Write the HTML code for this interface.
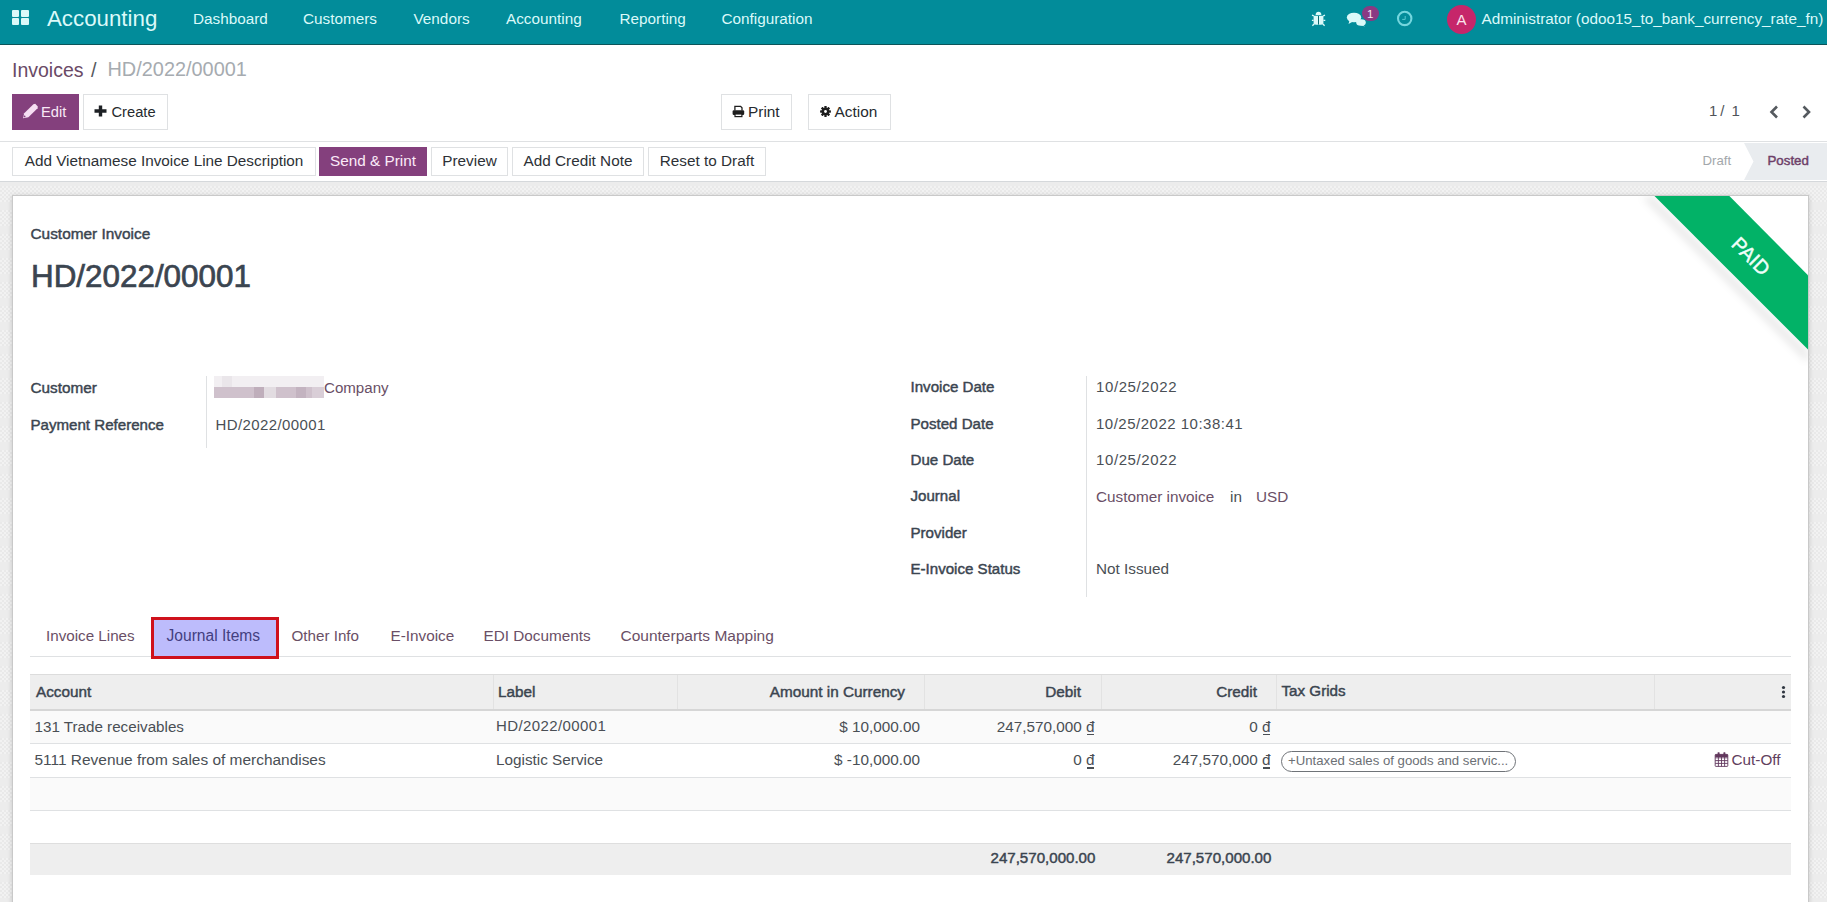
<!DOCTYPE html>
<html><head><meta charset="utf-8"><style>
html,body{margin:0;padding:0;width:1827px;height:902px;overflow:hidden;background:#fff;}
body{position:relative;font-family:"Liberation Sans", sans-serif;}
.t{position:absolute;white-space:nowrap;}
.b{position:absolute;}
</style></head><body>
<div class="b" style="left:0px;top:0px;width:1827px;height:44px;background:#028c9a;"></div>
<div class="b" style="left:0px;top:44px;width:1827px;height:1px;background:#0b5459;"></div>
<div class="b" style="left:11.5px;top:10.3px;width:7.7px;height:6.8px;background:#dbf9f9;border-radius:1px;"></div>
<div class="b" style="left:20.9px;top:10.3px;width:7.7px;height:6.8px;background:#dbf9f9;border-radius:1px;"></div>
<div class="b" style="left:11.5px;top:18.1px;width:7.7px;height:6.8px;background:#dbf9f9;border-radius:1px;"></div>
<div class="b" style="left:20.9px;top:18.1px;width:7.7px;height:6.8px;background:#dbf9f9;border-radius:1px;"></div>
<div class="t " style="left:47.00px;top:5.13px;font-size:22.3px;line-height:27.88px;color:#dbf9f9;font-weight:400;">Accounting</div>
<div class="t " style="left:193.00px;top:9.44px;font-size:15.3px;line-height:19.12px;color:#dbf9f9;font-weight:400;">Dashboard</div>
<div class="t " style="left:303.00px;top:9.44px;font-size:15.3px;line-height:19.12px;color:#dbf9f9;font-weight:400;">Customers</div>
<div class="t " style="left:413.50px;top:9.44px;font-size:15.3px;line-height:19.12px;color:#dbf9f9;font-weight:400;">Vendors</div>
<div class="t " style="left:506.00px;top:9.44px;font-size:15.3px;line-height:19.12px;color:#dbf9f9;font-weight:400;">Accounting</div>
<div class="t " style="left:619.50px;top:9.44px;font-size:15.3px;line-height:19.12px;color:#dbf9f9;font-weight:400;">Reporting</div>
<div class="t " style="left:721.50px;top:9.44px;font-size:15.3px;line-height:19.12px;color:#dbf9f9;font-weight:400;">Configuration</div>
<svg class="b" style="left:1306px;top:6px" width="26" height="24" viewBox="0 0 26 24">
<path d="M9.6 8.9 Q9.8 5.8 12.5 5.8 Q15.2 5.8 15.4 8.9 Z" fill="#dbf9f9"/>
<path d="M7.6 9.7 H17.4 V16.5 Q17.4 18.8 15 18.8 H10 Q7.6 18.8 7.6 16.5 Z" fill="#dbf9f9"/>
<rect x="12" y="10" width="1" height="8.6" fill="#0a6a72"/>
<path d="M7.8 9.9 L6 9.2 M17.2 9.9 L19 9.2 M7.6 14.3 H5.9 M17.4 14.3 H19.3 M8.3 17.8 L6.4 19.8 M16.7 17.8 L18.6 19.8" stroke="#dbf9f9" stroke-width="1.3"/>
</svg>
<svg class="b" style="left:1346px;top:11px" width="20" height="16" viewBox="0 0 20 16">
<ellipse cx="15" cy="11.5" rx="4.8" ry="3.2" fill="#dbf9f9"/>
<path d="M16 13 L19 15.5 L14 14 Z" fill="#dbf9f9"/>
<ellipse cx="8" cy="6.5" rx="7.2" ry="4.8" fill="#dbf9f9"/>
<path d="M3.5 9.5 L2.5 13 L7 10.5 Z" fill="#dbf9f9"/>
</svg>
<div class="b" style="left:1361.5px;top:6px;width:17.5px;height:15px;background:#8a3a83;border-radius:8px;"></div>
<div class="t " style="left:1361.50px;top:7.03px;font-size:11.5px;line-height:14.38px;color:#f6e6f4;font-weight:400;width:17.5px;text-align:center;">1</div>
<svg class="b" style="left:1396px;top:10px" width="17" height="17" viewBox="0 0 17 17">
<circle cx="8.7" cy="8.4" r="6.7" fill="none" stroke="#74d6de" stroke-width="2.1"/>
<path d="M9.2 6 V9.4 H6.2" fill="none" stroke="#58c9cf" stroke-width="1"/>
</svg>
<div class="b" style="left:1447px;top:5px;width:29px;height:29px;background:#c6266a;border-radius:50%;"></div>
<div class="t " style="left:1447.00px;top:10.63px;font-size:15px;line-height:18.75px;color:#fbe3ec;font-weight:400;width:29px;text-align:center;">A</div>
<div class="t " style="left:1481.50px;top:8.94px;font-size:15.3px;line-height:19.12px;color:#dbf9f9;font-weight:400;">Administrator (odoo15_to_bank_currency_rate_fn)</div>
<div class="t " style="left:12.00px;top:57.85px;font-size:19.5px;line-height:24.38px;color:#6a4a66;font-weight:400;">Invoices</div>
<div class="t " style="left:91.00px;top:57.56px;font-size:19.8px;line-height:24.75px;color:#55595e;font-weight:400;">/</div>
<div class="t " style="left:107.50px;top:57.46px;font-size:19.9px;line-height:24.88px;color:#a6abb0;font-weight:400;">HD/2022/00001</div>
<div class="b" style="left:12px;top:94px;width:67px;height:36px;background:#84407d;"></div>
<svg class="b" style="left:0;top:0" width="60" height="130" viewBox="0 0 60 130">
<polygon points="23,118.2 24.2,113.2 33.4,104.2 35.2,103.8 37.8,106.4 37.6,108.2 28.4,117.2" fill="#f6def3"/>
<circle cx="24.6" cy="116.4" r="0.9" fill="#84407d"/>
</svg>
<div class="t " style="left:41.00px;top:102.92px;font-size:14.7px;line-height:18.38px;color:#f9e9f7;font-weight:400;">Edit</div>
<div class="b" style="left:83px;top:94px;width:85px;height:36px;background:#fff;border:1px solid #dfe1e3;box-sizing:border-box;"></div>
<svg class="b" style="left:94px;top:105px" width="13" height="12" viewBox="0 0 13 12">
<path d="M6.5 0.5 V11.5 M0.5 6 H12.5" stroke="#1d2024" stroke-width="3.4"/>
</svg>
<div class="t " style="left:111.50px;top:102.92px;font-size:14.7px;line-height:18.38px;color:#262a2e;font-weight:400;">Create</div>
<div class="b" style="left:721px;top:94px;width:71px;height:36px;background:#fff;border:1px solid #dfe1e3;box-sizing:border-box;"></div>
<svg class="b" style="left:732px;top:105px" width="13" height="13" viewBox="0 0 13 13">
<path d="M2.9 5.5 V1.4 H8.6 L10 2.8 V5.5" fill="none" stroke="#1e1e1e" stroke-width="1.3"/>
<rect x="0.6" y="5.3" width="11.6" height="4.6" rx="1.2" fill="#1e1e1e"/>
<rect x="3" y="9" width="6.9" height="2.6" fill="#fff" stroke="#1e1e1e" stroke-width="1.2"/>
</svg>
<div class="t " style="left:748.00px;top:101.74px;font-size:15.4px;line-height:19.25px;color:#262a2e;font-weight:400;">Print</div>
<div class="b" style="left:808px;top:94px;width:83px;height:36px;background:#fff;border:1px solid #dfe1e3;box-sizing:border-box;"></div>
<svg class="b" style="left:819.8px;top:106px" width="11" height="11" viewBox="0 0 11 11">
<g fill="#1e1e1e"><circle cx="5.5" cy="5.5" r="3.7"/>
<rect x="4.3" y="0.1" width="2.4" height="10.8" rx="0.4"/><rect x="0.1" y="4.3" width="10.8" height="2.4" rx="0.4"/>
<rect x="4.3" y="0.1" width="2.4" height="10.8" rx="0.4" transform="rotate(45 5.5 5.5)"/><rect x="4.3" y="0.1" width="2.4" height="10.8" rx="0.4" transform="rotate(-45 5.5 5.5)"/></g>
<circle cx="5.5" cy="5.5" r="1.4" fill="#fff"/>
</svg>
<div class="t " style="left:834.50px;top:101.74px;font-size:15.4px;line-height:19.25px;color:#262a2e;font-weight:400;">Action</div>
<div class="t " style="left:1709.00px;top:101.83px;font-size:15px;line-height:18.75px;color:#4f5459;font-weight:400;">1</div>
<div class="t " style="left:1720.30px;top:101.83px;font-size:15px;line-height:18.75px;color:#4f5459;font-weight:400;">/</div>
<div class="t " style="left:1731.50px;top:101.83px;font-size:15px;line-height:18.75px;color:#4f5459;font-weight:400;">1</div>
<svg class="b" style="left:1768px;top:104px" width="46" height="16" viewBox="0 0 46 16">
<path d="M9 2.5 L3.5 8 L9 13.5" fill="none" stroke="#555a5f" stroke-width="2.6"/>
<path d="M35.5 2.5 L41 8 L35.5 13.5" fill="none" stroke="#555a5f" stroke-width="2.6"/>
</svg>
<div class="b" style="left:0px;top:141px;width:1827px;height:1px;background:#dfe1e3;"></div>
<div class="b" style="left:12px;top:147px;width:304px;height:29px;background:#fff;border:1px solid #dfe1e3;box-sizing:border-box;"></div>
<div class="t " style="left:12.00px;top:151.24px;font-size:15.3px;line-height:19.12px;color:#2d3136;font-weight:400;width:304px;text-align:center;">Add Vietnamese Invoice Line Description</div>
<div class="b" style="left:319px;top:147px;width:108px;height:29px;background:#84407d;"></div>
<div class="t " style="left:319.00px;top:151.24px;font-size:15.3px;line-height:19.12px;color:#fbeaf8;font-weight:400;width:108px;text-align:center;">Send &amp; Print</div>
<div class="b" style="left:431px;top:147px;width:77px;height:29px;background:#fff;border:1px solid #dfe1e3;box-sizing:border-box;"></div>
<div class="t " style="left:431.00px;top:151.24px;font-size:15.3px;line-height:19.12px;color:#2d3136;font-weight:400;width:77px;text-align:center;">Preview</div>
<div class="b" style="left:512px;top:147px;width:132px;height:29px;background:#fff;border:1px solid #dfe1e3;box-sizing:border-box;"></div>
<div class="t " style="left:512.00px;top:151.24px;font-size:15.3px;line-height:19.12px;color:#2d3136;font-weight:400;width:132px;text-align:center;">Add Credit Note</div>
<div class="b" style="left:648px;top:147px;width:118px;height:29px;background:#fff;border:1px solid #dfe1e3;box-sizing:border-box;"></div>
<div class="t " style="left:648.00px;top:151.24px;font-size:15.3px;line-height:19.12px;color:#2d3136;font-weight:400;width:118px;text-align:center;">Reset to Draft</div>
<svg class="b" style="left:1735px;top:143px" width="92" height="37" viewBox="0 0 92 37">
<path d="M9 0 H92 V37 H9 L18.5 18.5 Z" fill="#e9ecef"/>
</svg>
<div class="t " style="left:1702.50px;top:153.18px;font-size:13.2px;line-height:16.5px;color:#a3a7ab;font-weight:400;">Draft</div>
<div class="t " style="left:1767.50px;top:153.08px;font-size:13.3px;line-height:16.62px;color:#6e3f69;font-weight:400;-webkit-text-stroke:0.45px #6e3f69;">Posted</div>
<div class="b" style="left:0px;top:181px;width:1827px;height:1px;#cfd2d5;background:#d5d8db;"></div>
<div class="b" style="left:0px;top:182px;width:1827px;height:720px;background-color:#ececec;background-image:repeating-linear-gradient(to bottom, transparent 0 16px, #ececec 16px 24px),repeating-conic-gradient(#f2f2f2 0 25%, #e9e9e9 0 50%);background-size:auto,4px 4px;background-position:0 4px,0 0;"></div>
<div class="b" style="left:12px;top:195px;width:1797px;height:720px;background:#fff;border:1px solid #c9c9c9;box-sizing:border-box;box-shadow:0 1px 5px rgba(0,0,0,0.16);"></div>
<div class="t " style="left:30.50px;top:223.74px;font-size:15.4px;line-height:19.25px;color:#3b4550;font-weight:400;-webkit-text-stroke:0.45px #3b4550;">Customer Invoice</div>
<div class="t " style="left:31.00px;top:257.49px;font-size:31.4px;line-height:39.25px;color:#3b4550;font-weight:400;-webkit-text-stroke:0.7px #3b4550;">HD/2022/00001</div>
<div class="t " style="left:30.50px;top:378.04px;font-size:15.3px;line-height:19.12px;color:#3b4550;font-weight:400;-webkit-text-stroke:0.45px #3b4550;">Customer</div>
<div class="t " style="left:30.50px;top:415.63px;font-size:15.1px;line-height:18.88px;color:#3b4550;font-weight:400;-webkit-text-stroke:0.45px #3b4550;">Payment Reference</div>
<div class="b" style="left:206px;top:376px;width:1px;height:72px;background:#dfe1e3;"></div>
<div class="b" style="left:214px;top:376px;width:110px;height:22px;overflow:hidden">
<div style="position:absolute;left:0;top:0;width:110px;height:11px;background:#f2eff2"></div>
<div style="position:absolute;left:0;top:11px;width:110px;height:11px;background:#cfc1cc"></div>
<div style="position:absolute;left:8px;top:0;width:10px;height:11px;background:#eae6ea"></div>
<div style="position:absolute;left:40px;top:11px;width:10px;height:11px;background:#bfaebb"></div>
<div style="position:absolute;left:50px;top:11px;width:12px;height:11px;background:#e2dce1"></div>
<div style="position:absolute;left:82px;top:11px;width:10px;height:11px;background:#c3b3c0"></div>
<div style="position:absolute;left:98px;top:11px;width:12px;height:11px;background:#d9ced7"></div>
</div>
<div class="t " style="left:324.00px;top:378.53px;font-size:15.1px;line-height:18.88px;color:#6a4f66;font-weight:400;">Company</div>
<div class="t " style="left:215.50px;top:415.73px;font-size:15px;line-height:18.75px;color:#4a4f55;font-weight:400;letter-spacing:0.4px;">HD/2022/00001</div>
<div class="t " style="left:910.50px;top:378.43px;font-size:15.1px;line-height:18.88px;color:#3b4550;font-weight:400;-webkit-text-stroke:0.45px #3b4550;">Invoice Date</div>
<div class="t " style="left:910.50px;top:415.13px;font-size:15.1px;line-height:18.88px;color:#3b4550;font-weight:400;-webkit-text-stroke:0.45px #3b4550;">Posted Date</div>
<div class="t " style="left:910.50px;top:451.23px;font-size:15.1px;line-height:18.88px;color:#3b4550;font-weight:400;-webkit-text-stroke:0.45px #3b4550;">Due Date</div>
<div class="t " style="left:910.50px;top:487.13px;font-size:15.1px;line-height:18.88px;color:#3b4550;font-weight:400;-webkit-text-stroke:0.45px #3b4550;">Journal</div>
<div class="t " style="left:910.50px;top:524.33px;font-size:15.1px;line-height:18.88px;color:#3b4550;font-weight:400;-webkit-text-stroke:0.45px #3b4550;">Provider</div>
<div class="t " style="left:910.50px;top:560.13px;font-size:15.1px;line-height:18.88px;color:#3b4550;font-weight:400;-webkit-text-stroke:0.45px #3b4550;">E-Invoice Status</div>
<div class="b" style="left:1086px;top:376px;width:1px;height:221px;background:#dfe1e3;"></div>
<div class="t " style="left:1096.00px;top:378.33px;font-size:15px;line-height:18.75px;color:#4a4f55;font-weight:400;letter-spacing:0.6px;">10/25/2022</div>
<div class="t " style="left:1096.00px;top:415.03px;font-size:15px;line-height:18.75px;color:#4a4f55;font-weight:400;letter-spacing:0.5px;">10/25/2022 10:38:41</div>
<div class="t " style="left:1096.00px;top:451.23px;font-size:15px;line-height:18.75px;color:#4a4f55;font-weight:400;letter-spacing:0.6px;">10/25/2022</div>
<div class="t " style="left:1096.00px;top:487.44px;font-size:15.3px;line-height:19.12px;color:#6a4f66;font-weight:400;">Customer invoice</div>
<div class="t " style="left:1230.00px;top:487.14px;font-size:15.3px;line-height:19.12px;color:#4a4f55;font-weight:400;">in</div>
<div class="t " style="left:1256.00px;top:487.44px;font-size:15.3px;line-height:19.12px;color:#6a4f66;font-weight:400;">USD</div>
<div class="t " style="left:1096.00px;top:559.44px;font-size:15.3px;line-height:19.12px;color:#4a4f55;font-weight:400;">Not Issued</div>
<div class="b" style="left:30px;top:656px;width:1761px;height:1px;background:#dfe1e3;"></div>
<div class="b" style="left:151px;top:617px;width:128px;height:41.5px;background:#bdbcfc;border:3px solid #cf111c;box-sizing:border-box;"></div>
<div class="t " style="left:46.00px;top:626.33px;font-size:15.2px;line-height:19.0px;color:#6a4f66;font-weight:400;">Invoice Lines</div>
<div class="t " style="left:166.50px;top:625.94px;font-size:15.6px;line-height:19.5px;color:#433f80;font-weight:400;">Journal Items</div>
<div class="t " style="left:291.50px;top:626.33px;font-size:15.2px;line-height:19.0px;color:#6a4f66;font-weight:400;">Other Info</div>
<div class="t " style="left:390.50px;top:626.24px;font-size:15.3px;line-height:19.12px;color:#6a4f66;font-weight:400;">E-Invoice</div>
<div class="t " style="left:483.50px;top:626.24px;font-size:15.3px;line-height:19.12px;color:#6a4f66;font-weight:400;">EDI Documents</div>
<div class="t " style="left:620.50px;top:626.04px;font-size:15.5px;line-height:19.38px;color:#6a4f66;font-weight:400;">Counterparts Mapping</div>
<div class="b" style="left:30px;top:674px;width:1761px;height:37px;background:#eeeeee;border-top:1px solid #dcdcdc;border-bottom:2px solid #d6d6d6;box-sizing:border-box;"></div>
<div class="b" style="left:492.5px;top:675px;width:1px;height:34px;background:#e2e2e2;"></div>
<div class="b" style="left:677px;top:675px;width:1px;height:34px;background:#e2e2e2;"></div>
<div class="b" style="left:924px;top:675px;width:1px;height:34px;background:#e2e2e2;"></div>
<div class="b" style="left:1101px;top:675px;width:1px;height:34px;background:#e2e2e2;"></div>
<div class="b" style="left:1276px;top:675px;width:1px;height:34px;background:#e2e2e2;"></div>
<div class="b" style="left:1653.5px;top:675px;width:1px;height:34px;background:#e2e2e2;"></div>
<div class="t " style="left:36.00px;top:681.94px;font-size:15.3px;line-height:19.12px;color:#3b4550;font-weight:400;-webkit-text-stroke:0.45px #3b4550;">Account</div>
<div class="t " style="left:498.00px;top:681.94px;font-size:15.3px;line-height:19.12px;color:#3b4550;font-weight:400;-webkit-text-stroke:0.45px #3b4550;">Label</div>
<div class="t " style="right:922.00px;top:681.94px;font-size:15.3px;line-height:19.12px;color:#3b4550;font-weight:400;text-align:right;-webkit-text-stroke:0.45px #3b4550;">Amount in Currency</div>
<div class="t " style="right:746.00px;top:681.94px;font-size:15.3px;line-height:19.12px;color:#3b4550;font-weight:400;text-align:right;-webkit-text-stroke:0.45px #3b4550;">Debit</div>
<div class="t " style="right:570.00px;top:681.94px;font-size:15.3px;line-height:19.12px;color:#3b4550;font-weight:400;text-align:right;-webkit-text-stroke:0.45px #3b4550;">Credit</div>
<div class="t " style="left:1281.50px;top:680.53px;font-size:15.2px;line-height:19.0px;color:#3b4550;font-weight:400;-webkit-text-stroke:0.45px #3b4550;">Tax Grids</div>
<svg class="b" style="left:1781px;top:685px" width="5" height="14" viewBox="0 0 5 14">
<g fill="#2f3640"><circle cx="2.5" cy="2.5" r="1.6"/><circle cx="2.5" cy="7" r="1.6"/><circle cx="2.5" cy="11.5" r="1.6"/></g></svg>
<div class="b" style="left:30px;top:711px;width:1761px;height:32px;background:#fafafa;"></div>
<div class="b" style="left:30px;top:743px;width:1761px;height:1px;background:#dfe1e3;"></div>
<div class="b" style="left:30px;top:744px;width:1761px;height:33px;background:#fff;"></div>
<div class="b" style="left:30px;top:777px;width:1761px;height:1px;background:#dfe1e3;"></div>
<div class="b" style="left:30px;top:778px;width:1761px;height:32px;background:#fafafa;"></div>
<div class="b" style="left:30px;top:810px;width:1761px;height:1px;background:#dfe1e3;"></div>
<div class="b" style="left:30px;top:843px;width:1761px;height:32px;background:#eeeeee;border-top:1px solid #dedede;box-sizing:border-box;"></div>
<div class="t " style="left:34.50px;top:717.03px;font-size:15.2px;line-height:19.0px;color:#4a4f55;font-weight:400;">131 Trade receivables</div>
<div class="t " style="left:496.00px;top:717.23px;font-size:15px;line-height:18.75px;color:#4a4f55;font-weight:400;letter-spacing:0.4px;">HD/2022/00001</div>
<div class="t " style="right:907.00px;top:716.94px;font-size:15.3px;line-height:19.12px;color:#4a4f55;font-weight:400;text-align:right;">$ 10,000.00</div>
<div class="t " style="right:732.40px;top:716.94px;font-size:15.3px;line-height:19.12px;color:#4a4f55;font-weight:400;text-align:right;">247,570,000 <span style="display:inline-block;position:relative;">&#x0111;<span style="position:absolute;left:0.5px;right:0.5px;bottom:1px;height:1.2px;background:currentColor"></span></span></div>
<div class="t " style="right:556.40px;top:716.94px;font-size:15.3px;line-height:19.12px;color:#4a4f55;font-weight:400;text-align:right;">0 <span style="display:inline-block;position:relative;">&#x0111;<span style="position:absolute;left:0.5px;right:0.5px;bottom:1px;height:1.2px;background:currentColor"></span></span></div>
<div class="t " style="left:34.50px;top:750.29px;font-size:15.45px;line-height:19.31px;color:#4a4f55;font-weight:400;">5111 Revenue from sales of merchandises</div>
<div class="t " style="left:496.00px;top:750.44px;font-size:15.3px;line-height:19.12px;color:#4a4f55;font-weight:400;">Logistic Service</div>
<div class="t " style="right:907.00px;top:750.44px;font-size:15.3px;line-height:19.12px;color:#4a4f55;font-weight:400;text-align:right;">$ -10,000.00</div>
<div class="t " style="right:732.40px;top:750.44px;font-size:15.3px;line-height:19.12px;color:#4a4f55;font-weight:400;text-align:right;">0 <span style="display:inline-block;position:relative;">&#x0111;<span style="position:absolute;left:0.5px;right:0.5px;bottom:1px;height:1.2px;background:currentColor"></span></span></div>
<div class="t " style="right:556.40px;top:750.44px;font-size:15.3px;line-height:19.12px;color:#4a4f55;font-weight:400;text-align:right;">247,570,000 <span style="display:inline-block;position:relative;">&#x0111;<span style="position:absolute;left:0.5px;right:0.5px;bottom:1px;height:1.2px;background:currentColor"></span></span></div>
<div class="b" style="left:1280.5px;top:751px;width:235px;height:21px;border:1.3px solid #6f7378;border-radius:11px;box-sizing:border-box;background:#fff;"></div>
<div class="t " style="left:1288.00px;top:753.18px;font-size:13.2px;line-height:16.5px;color:#6c7075;font-weight:400;">+Untaxed sales of goods and servic...</div>
<svg class="b" style="left:1714px;top:751px" width="15" height="16" viewBox="0 0 15 16">
<g fill="none" stroke="#62385d" stroke-width="0.9">
<rect x="1.2" y="3.4" width="12.6" height="12" rx="0.6"/>
<path d="M1.2 6.8 H13.8 M1.2 9.6 H13.8 M1.2 12.4 H13.8 M4.4 6 V15.4 M7.5 6 V15.4 M10.6 6 V15.4"/>
</g>
<rect x="1.2" y="3.4" width="12.6" height="2.6" fill="#62385d"/>
<rect x="3.6" y="1.2" width="2" height="3" rx="0.6" fill="#62385d"/><rect x="9.4" y="1.2" width="2" height="3" rx="0.6" fill="#62385d"/>
</svg>
<div class="t " style="left:1731.50px;top:750.44px;font-size:15.3px;line-height:19.12px;color:#62405e;font-weight:400;">Cut-Off</div>
<div class="t " style="right:731.60px;top:848.93px;font-size:15.1px;line-height:18.88px;color:#3b4550;font-weight:400;text-align:right;-webkit-text-stroke:0.45px #3b4550;">247,570,000.00</div>
<div class="t " style="right:555.60px;top:848.93px;font-size:15.1px;line-height:18.88px;color:#3b4550;font-weight:400;text-align:right;-webkit-text-stroke:0.45px #3b4550;">247,570,000.00</div>
<svg class="b" style="left:1600px;top:196px" width="208" height="170" viewBox="1600 196 208 170">
<defs><filter id="rs" x="-20%" y="-20%" width="140%" height="140%"><feGaussianBlur stdDeviation="4"/></filter></defs>
<polygon points="1652,197 1808,353 1808,362 1643,197" fill="rgba(0,0,0,0.11)" filter="url(#rs)"/>
<polygon points="1654.5,196 1729.4,196 1808,275.3 1808,349.6" fill="#02b267"/>
</svg>
<div class="t" style="left:1700.5px;top:243px;width:100px;height:26px;line-height:26px;text-align:center;font-size:19.8px;color:#effffa;-webkit-text-stroke:0.45px #effffa;transform:rotate(45deg);transform-origin:50% 50%;">PAID</div>
</body></html>
